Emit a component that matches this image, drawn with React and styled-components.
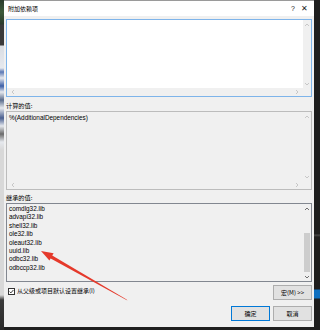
import React from "react";
import styled, { createGlobalStyle } from "styled-components";

const GlobalStyle = createGlobalStyle`
  html, body { margin: 0; padding: 0; background: #1f1f1f; overflow: hidden; }
  #root { width: 320px; height: 330px; }
`;

const CJK = `"Noto Sans CJK SC", "Noto Sans", sans-serif`;
const LAT = `"Liberation Sans", "Noto Sans CJK SC", sans-serif`;

const Screen = styled.div`
  position: relative;
  display: flex;
  width: 320px;
  height: 330px;
  background: #1f1f1f;
  overflow: hidden;
`;

const LeftStrip = styled.div`
  width: 4px;
  flex: none;
  background: linear-gradient(
    to bottom,
    #2b3b2c 0px, #3c5a3a 12px, #2b3b2c 24px,
    #3a3a3a 25px, #3a3a3a 45px,
    #d9dde3 46px, #e6e9ee 68px,
    #5a78b5 72px, #e6e9ee 78px, #3b5fa8 86px, #e6e9ee 92px,
    #5a6c8c 100px, #e6e9ee 108px, #4a5f90 118px, #e6e9ee 126px,
    #6b6b6b 134px, #e6e9ee 142px, #d8d8d8 150px, #d8d8d8 295px,
    #3a3a3a 300px, #2a2a2a 330px
  );
`;

const RightStrip = styled.div`
  flex: 1;
  background: linear-gradient(
    to bottom,
    #1e1e1e 0px, #1e1e1e 234px, #4a4a4a 235px, #1e1e1e 237px,
    #1e1e1e 289px, #0e6fc0 290px, #0e6fc0 298px, #1e1e1e 299px
  );
`;

const Dialog = styled.div`
  width: 310px;
  height: 327px;
  flex: none;
  display: flex;
  flex-direction: column;
  background: #f0f0f0;
  border-top: 1px solid #9a9a9a;
  box-sizing: border-box;
`;

const TitleBar = styled.div`
  height: 15px;
  flex: none;
  display: flex;
  align-items: center;
  background: #ffffff;
  padding-left: 4px;
`;

const Title = styled.span`
  flex: 1;
  font-family: ${CJK};
  font-size: 6px;
  color: #000;
  line-height: 1;
`;

const TitleBtn = styled.span`
  width: ${(p) => p.$w}px;
  text-align: center;
  font-family: ${LAT};
  font-size: ${(p) => p.$size}px;
  color: #222;
  line-height: 1;
`;

const Body = styled.div`
  flex: 1;
  display: flex;
  flex-direction: column;
  padding: 3px 2px 0 2px;
`;

const Box = styled.div`
  height: ${(p) => p.$h}px;
  box-sizing: border-box;
  border: 1px solid ${(p) => p.$border};
  background: ${(p) => p.$bg};
  display: grid;
  grid-template-columns: 1fr 8px;
  grid-template-rows: ${(p) => (p.$hscroll ? "1fr 8px" : "1fr")};
`;

const Content = styled.div`
  font-family: ${LAT};
  font-size: 6.4px;
  line-height: 8.4px;
  color: #000;
  padding: ${(p) => p.$pad};
  overflow: hidden;
`;

const VScroll = styled.div`
  display: flex;
  flex-direction: column;
  background: #f0f0f0;
`;

const HScroll = styled.div`
  display: flex;
  justify-content: space-between;
  align-items: center;
  background: #f0f0f0;
  padding: 0 3px;
`;

const Corner = styled.div`
  background: #f0f0f0;
`;

const ArrowBtn = styled.div`
  height: 9px;
  flex: none;
  display: flex;
  align-items: center;
  justify-content: center;
`;

const Track = styled.div`
  flex: 1;
  display: flex;
  flex-direction: column;
  justify-content: flex-end;
  padding: 0 1px;
`;

const Thumb = styled.div`
  height: 39px;
  background: #cdcdcd;
`;

const Label = styled.div`
  font-family: ${CJK};
  font-size: 6.2px;
  line-height: 10px;
  color: #000;
  padding-top: ${(p) => p.$pt}px;
  height: ${(p) => p.$h}px;
  box-sizing: border-box;
`;

const Row = styled.div`
  display: flex;
  align-items: flex-start;
  justify-content: ${(p) => p.$justify || "space-between"};
  gap: 3px;
  margin-top: ${(p) => p.$mt}px;
`;

const CheckWrap = styled.label`
  display: flex;
  align-items: center;
  gap: 2px;
  padding: 2px 0 0 2px;
  font-family: ${CJK};
  font-size: 6px;
  line-height: 8px;
  color: #000;
`;

const CheckBox = styled.span`
  width: 7px;
  height: 7px;
  box-sizing: border-box;
  border: 1px solid #333;
  background: #fff;
  display: flex;
  align-items: center;
  justify-content: center;
`;

const Button = styled.div`
  width: ${(p) => p.$w}px;
  height: 15px;
  box-sizing: border-box;
  display: flex;
  align-items: center;
  justify-content: center;
  background: #e1e1e1;
  border: 1px solid ${(p) => (p.$primary ? "#0078d7" : "#adadad")};
  font-family: ${CJK};
  font-size: 6px;
  color: #000;
  line-height: 1;
`;

const Overlay = styled.svg`
  position: absolute;
  left: 0;
  top: 0;
  pointer-events: none;
`;

const Chevron = ({ dir, color = "#a6a6a6" }) => {
  const pts = {
    up: "1,4 3,2 5,4",
    down: "1,2 3,4 5,2",
    left: "4,1 2,3 4,5",
    right: "2,1 4,3 2,5",
  }[dir];
  return (
    <svg width="6" height="6" viewBox="0 0 6 6">
      <polyline points={pts} fill="none" stroke={color} strokeWidth="0.9" />
    </svg>
  );
};

const libs = [
  "comdlg32.lib",
  "advapi32.lib",
  "shell32.lib",
  "ole32.lib",
  "oleaut32.lib",
  "uuid.lib",
  "odbc32.lib",
  "odbccp32.lib",
];

export default function App() {
  return (
    <>
      <GlobalStyle />
      <Screen>
        <LeftStrip />
        <Dialog>
          <TitleBar>
            <Title>附加依赖项</Title>
            <TitleBtn $w={14} $size={7}>?</TitleBtn>
            <TitleBtn $w={8} $size={8}>✕</TitleBtn>
            <TitleBtn $w={6} $size={8} />
          </TitleBar>
          <Body>
            <Box $h={78} $border="#7eb4ea" $bg="#ffffff" $hscroll>
              <Content $pad="2px" />
              <VScroll>
                <ArrowBtn><Chevron dir="up" color="#c2c2c2" /></ArrowBtn>
                <Track />
                <ArrowBtn><Chevron dir="down" color="#c2c2c2" /></ArrowBtn>
              </VScroll>
              <HScroll>
                <Chevron dir="left" color="#c2c2c2" />
                <Chevron dir="right" color="#c2c2c2" />
              </HScroll>
              <Corner />
            </Box>
            <Label $pt={4} $h={14}>计算的值:</Label>
            <Box $h={79} $border="#bcbcbc" $bg="#f0f0f0" $hscroll>
              <Content $pad="1.5px 2px">%(AdditionalDependencies)</Content>
              <VScroll>
                <ArrowBtn><Chevron dir="up" color="#c2c2c2" /></ArrowBtn>
                <Track />
                <ArrowBtn><Chevron dir="down" color="#c2c2c2" /></ArrowBtn>
              </VScroll>
              <HScroll>
                <Chevron dir="left" color="#c2c2c2" />
                <Chevron dir="right" color="#c2c2c2" />
              </HScroll>
              <Corner />
            </Box>
            <Label $pt={3} $h={13}>继承的值:</Label>
            <Box $h={79} $border="#828790" $bg="#f0f0f0">
              <Content $pad="1px 2px">
                {libs.map((l) => (
                  <div key={l}>{l}</div>
                ))}
              </Content>
              <VScroll>
                <ArrowBtn><Chevron dir="up" color="#606060" /></ArrowBtn>
                <Track>
                  <Thumb />
                </Track>
                <ArrowBtn><Chevron dir="down" color="#606060" /></ArrowBtn>
              </VScroll>
            </Box>
            <Row $mt={3}>
              <CheckWrap>
                <CheckBox>
                  <svg width="5" height="5" viewBox="0 0 5 5">
                    <polyline points="0.6,2.6 1.9,3.9 4.4,1" fill="none" stroke="#222" strokeWidth="0.9" />
                  </svg>
                </CheckBox>
                从父级或项目默认设置继承(I)
              </CheckWrap>
              <Button $w={39}>宏(M) &gt;&gt;</Button>
            </Row>
            <Row $mt={6} $justify="flex-end">
              <Button $w={39} $primary>确定</Button>
              <Button $w={39}>取消</Button>
            </Row>
          </Body>
        </Dialog>
        <RightStrip />
        <Overlay width="320" height="330" viewBox="0 0 320 330">
          <polygon points="127.4,300.6 126.6,299.4 50.5,254.6 49.3,257.8" fill="#e5392b" />
          <polygon points="41,251 53.6,253.2 49.4,260.6" fill="#e5392b" />
        </Overlay>
      </Screen>
    </>
  );
}
